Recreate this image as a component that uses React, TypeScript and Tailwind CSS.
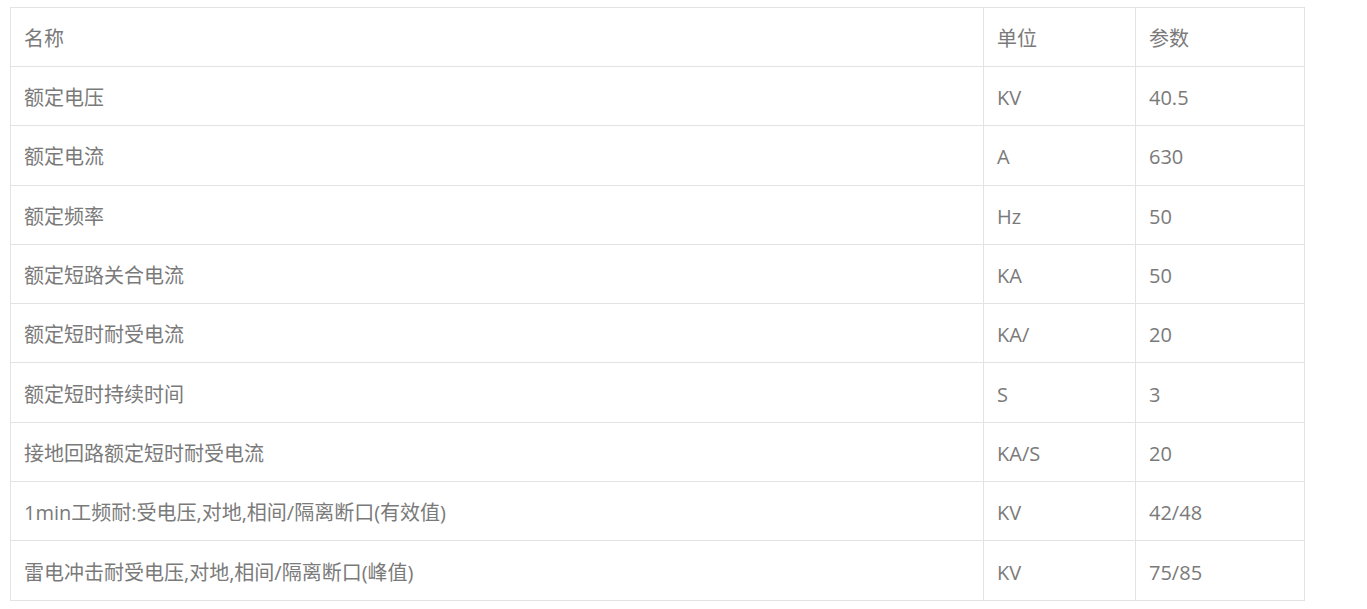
import React from 'react';

const rows: [string, string, string][] = [
  ['额定电压', 'KV', '40.5'],
  ['额定电流', 'A', '630'],
  ['额定频率', 'Hz', '50'],
  ['额定短路关合电流', 'KA', '50'],
  ['额定短时耐受电流', 'KA/', '20'],
  ['额定短时持续时间', 'S', '3'],
  ['接地回路额定短时耐受电流', 'KA/S', '20'],
  ['1min工频耐:受电压,对地,相间/隔离断口(有效值)', 'KV', '42/48'],
  ['雷电冲击耐受电压,对地,相间/隔离断口(峰值)', 'KV', '75/85'],
];

export default function App() {
  const cell = 'border border-[#e3e3e3] px-[13px] pt-[4px] text-left font-normal align-middle';
  return (
    <div
      className="min-h-screen bg-white pl-[10px] pt-[7px] text-[20px] leading-none text-[#7a7a7a]"
      style={{ fontFamily: '"Open Sans", "Noto Sans CJK SC", sans-serif' }}
    >
      <table className="w-[1294px] table-fixed border-collapse">
        <colgroup>
          <col className="w-[973px]" />
          <col className="w-[152px]" />
          <col className="w-[169px]" />
        </colgroup>
        <thead>
          <tr className="h-[59px]">
            <th className={cell}>名称</th>
            <th className={cell}>单位</th>
            <th className={cell}>参数</th>
          </tr>
        </thead>
        <tbody>
          {rows.map(([name, unit, value]) => (
            <tr key={name} className="h-[59.3px]">
              <td className={cell}>{name}</td>
              <td className={cell}>{unit}</td>
              <td className={cell}>{value}</td>
            </tr>
          ))}
        </tbody>
      </table>
    </div>
  );
}
